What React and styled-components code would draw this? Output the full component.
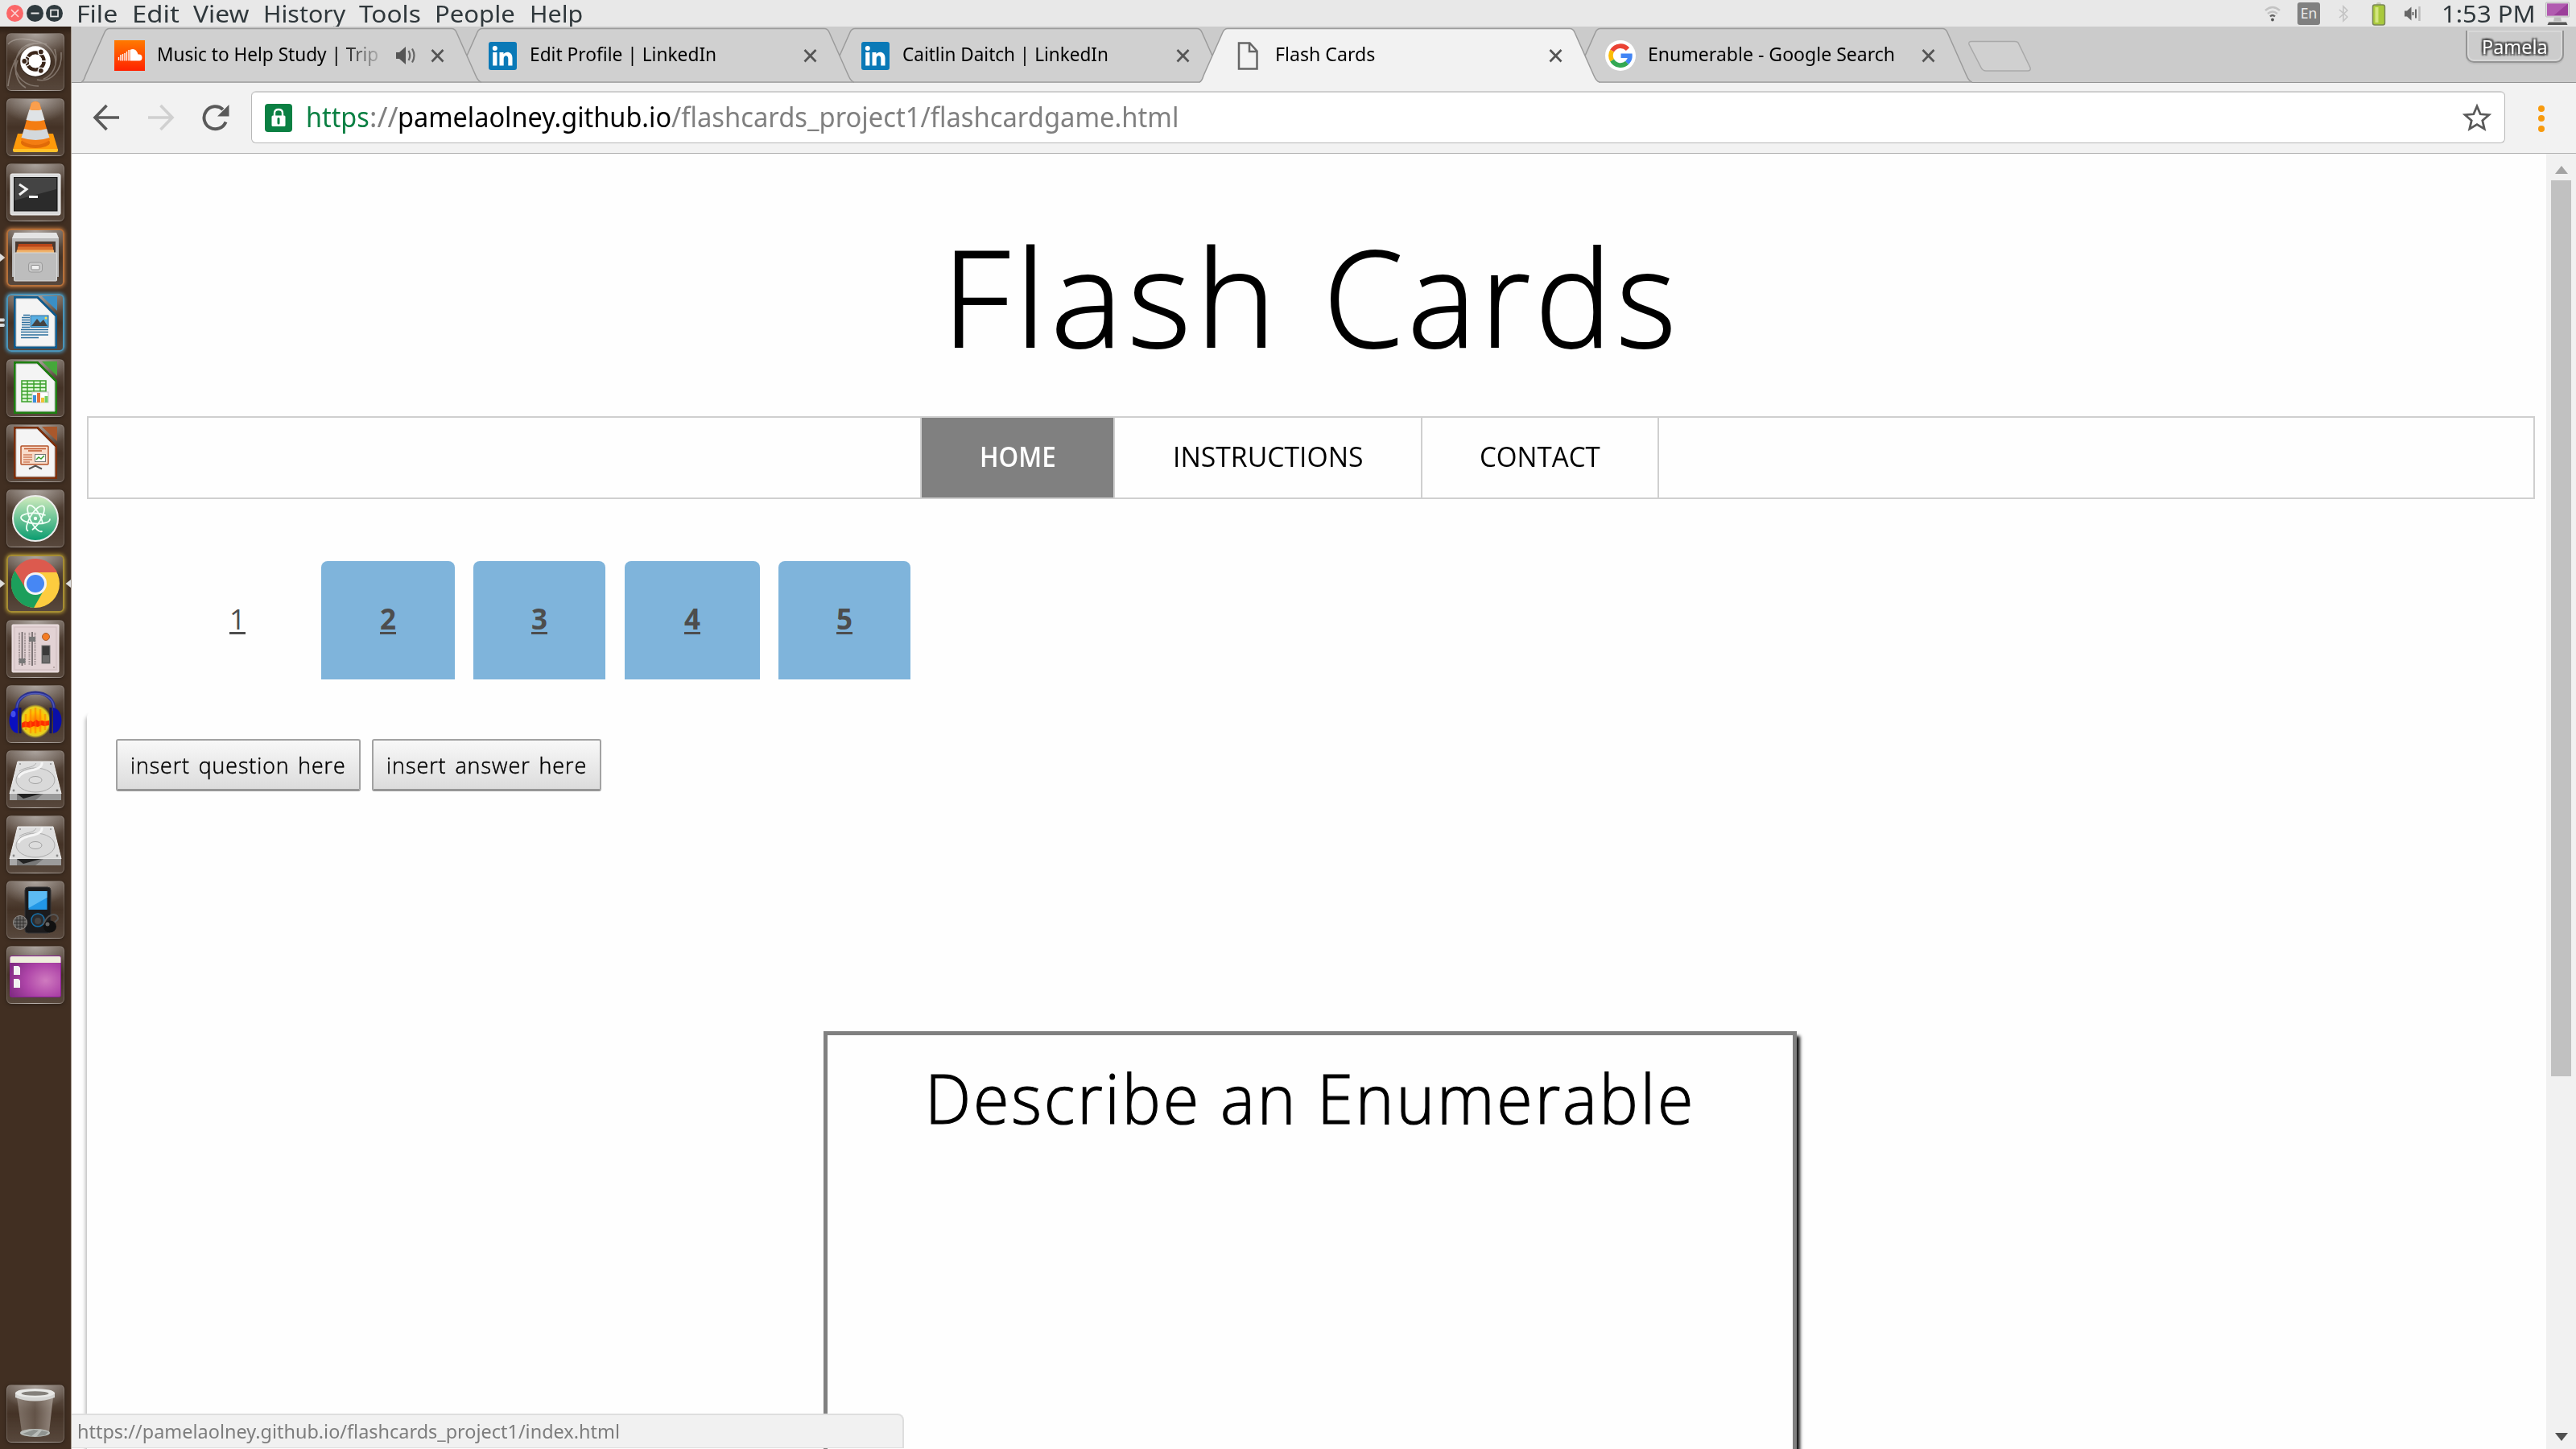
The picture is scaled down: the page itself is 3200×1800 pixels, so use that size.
import React, { useLayoutEffect, useRef, useState } from "react";
import styled, { createGlobalStyle, css } from "styled-components";

const UI_FONT = '"Noto Sans", "Open Sans", sans-serif';
const PAGE_FONT = '"Open Sans", "Noto Sans", sans-serif';

const GlobalStyle = createGlobalStyle`
  *, *::before, *::after { box-sizing: border-box; }
  html, body { margin: 0; padding: 0; }
  body { width: 3200px; height: 1800px; overflow: hidden; background: #fff; font-family: ${UI_FONT}; }
  svg { display: block; }
`;

/* ---------- text that fills a known measure ---------- */

const Measure = styled.span`
  display: inline-block;
  flex: none;
  width: ${(p) => p.$w}px;
  white-space: nowrap;
  text-align: left;
`;
const Stretch = styled.span`
  display: inline-block;
  transform-origin: 0 50%;
`;

function Fit({ w, children }) {
  const ref = useRef(null);
  const [scale, setScale] = useState(1);
  useLayoutEffect(() => {
    const update = () => {
      if (ref.current && ref.current.offsetWidth) setScale(w / ref.current.offsetWidth);
    };
    update();
    if (document.fonts) document.fonts.ready.then(update);
  }, [w]);
  return (
    <Measure $w={w}>
      <Stretch ref={ref} style={{ transform: `scaleX(${scale})` }}>
        {children}
      </Stretch>
    </Measure>
  );
}

/* ---------- desktop ---------- */

const Desktop = styled.div`
  width: 3200px;
  height: 1800px;
  display: flex;
  flex-direction: column;
  overflow: hidden;
`;

const MenuBar = styled.header`
  flex: none;
  height: 33px;
  background: #e8e8e8;
  display: flex;
  align-items: center;
  justify-content: space-between;
  padding: 0 8px 0 8px;
  color: #30383c;
  font-size: 29.5px;
  line-height: 33px;
`;
const WindowButtons = styled.div`
  display: flex;
  gap: 3.5px;
  width: 87px;
`;
const MenuLeft = styled.nav`
  display: flex;
  align-items: center;
`;
const MenuItem = styled.span`
  margin-right: ${(p) => p.$gap}px;
`;
const Tray = styled.div`
  display: flex;
  align-items: center;
`;
const KeyboardBadge = styled.span`
  width: 28px;
  height: 28px;
  margin: 0 19px 0 20px;
  border-radius: 3px;
  background: #808080;
  color: #e8e8e8;
  font-size: 17.5px;
  line-height: 27px;
  text-align: center;
`;
const Clock = styled.span`
  margin: 0 12px 0 26px;
`;

const Workspace = styled.div`
  flex: 1;
  min-height: 0;
  display: flex;
`;

/* ---------- launcher ---------- */

const Dock = styled.aside`
  flex: none;
  width: 89px;
  display: flex;
  flex-direction: column;
  padding: 8px 0;
  background: linear-gradient(180deg, #2b1d13 0, #412f22 10px, #412f22 100%);
  border-right: 1px solid #a79d92;
`;
const DockSlot = styled.div`
  display: grid;
  grid-template-columns: 8px 72px 8px;
  align-items: center;
  height: 72px;
  margin-bottom: 9px;
  ${(p) => p.$last && css`margin-top: auto; margin-bottom: 0;`}
`;
const Tile = styled.div`
  width: 72px;
  height: 72px;
  border-radius: 6px;
  border: 1.5px solid rgba(255, 255, 255, 0.17);
  background:
    radial-gradient(ellipse 44px 30px at 50% 0, rgba(255, 255, 255, 0.45), rgba(255, 255, 255, 0) 100%),
    linear-gradient(180deg, rgba(255, 255, 255, 0.22), rgba(255, 255, 255, 0.02) 50%, rgba(255, 255, 255, 0.12));
  box-shadow: 0 1px 5px rgba(0, 0, 0, 0.35);
  ${(p) =>
    p.$glow &&
    css`
      border: 2.5px solid ${p.$glow};
      box-shadow: 0 0 4px 1px ${p.$glow};
    `}
  & > svg {
    margin: ${(p) => (p.$glow ? "-2px" : "-1px")};
  }
`;

const Sheet = ({ dark, light, children }) => (
  <>
    <path d="M9 3h30l24 24v41H9z" fill={dark} />
    <path d="M12 6h26l22 22v37H12z" fill="#f4f4f4" stroke="#c5c5c5" />
    <path d="M44 3h19v18z" fill={light} />
    <path d="M39 3l24 24v2L38 4z" fill={dark} />
    {children}
  </>
);

const Disk = () => (
  <>
    <path d="M14 14h44l10 40H4z" fill="#dedede" stroke="#f2f2f2" />
    <path d="M4 54h64v8H4z" fill="#777" />
    <path d="M4 54h9v8H4z" fill="#a8a8a8" />
    <path d="M13 54h30l-22 6z" fill="#222" />
    <path d="M46 54h22v8H36z" fill="#9b9b9b" />
    <ellipse cx="36" cy="37" rx="24" ry="15" fill="#d9d9d9" stroke="#aaa" />
    <path d="M15 34c3-11 31-7 29-19" fill="none" stroke="#f5f5f5" strokeWidth="3" />
    <path d="M16 26c8-6 16-3 21-10" fill="none" stroke="#b0b0b0" />
    <ellipse cx="36" cy="37" rx="8" ry="4.5" fill="#ddd" stroke="#a2a2a2" />
    <circle cx="9" cy="50" r="1.4" fill="#888" />
    <circle cx="63" cy="50" r="1.4" fill="#888" />
    <circle cx="17" cy="17" r="0.9" fill="#888" />
    <circle cx="55" cy="17" r="0.9" fill="#888" />
  </>
);

const ICONS = {
  dash: (
    <>
      <path d="M2 14C8 6 24 6 36 10c16 2 26 16 25 28M2 66C8 20 30 8 50 14M12 52C8 28 18 14 34 13M10 34c0 24 16 32 30 32M24 68C10 60 10 44 14 34M68 24c2 24-14 38-30 34M60 20c6 20-4 34-14 37" fill="none" stroke="#c9c0ba" strokeOpacity="0.42" strokeWidth="1.6" />
      <circle cx="36.5" cy="36.5" r="19" fill="#000" opacity="0.25" />
      <circle cx="36" cy="35" r="18.8" fill="#fff" />
      <circle cx="36" cy="35" r="10.6" fill="none" stroke="#3a261a" strokeWidth="4.4" />
      <path d="M36 35L20 26M36 35L20 44M36 35h18M36 35l9-16M36 35l9 16" stroke="#fff" strokeWidth="1.4" />
      <circle cx="36" cy="35" r="8.2" fill="#fff" />
      {[[22.3, 35], [42.8, 23.4], [42.8, 46.8]].map(([x, y]) => (
        <circle key={`${x}-${y}`} cx={x} cy={y} r="3.5" fill="#3a261a" stroke="#fff" strokeWidth="1.2" />
      ))}
    </>
  ),
  vlc: (
    <>
      <path d="M14 44h44l6 20q0 2-2 2H10q-2 0-2-2z" fill="#ff9a0a" />
      <path d="M8 63h56v2q0 2-2 2H10q-2 0-2-2z" fill="#ffc02a" />
      <ellipse cx="36" cy="55" rx="18" ry="7" fill="#e06a08" />
      <path d="M31 6q5-4 10 0l13 46q-18 12-36 0z" fill="#f47d12" />
      <path d="M28.500 14q7 2 15 0l4 13q-11 3-23 0z" fill="#dfe3e6" />
      <path d="M22 38q14 4 28 0l3.500 11q-17 6-35 0z" fill="#d3d8dc" />
      <path d="M31 6q5-4 10 0l2.300 8q-7 2-14.600 0z" fill="#fa9f4e" />
    </>
  ),
  terminal: (
    <>
      <rect x="5" y="13" width="62" height="51" rx="2" fill="#d9d9d9" stroke="#f3f3f3" />
      <rect x="9.500" y="17.500" width="53.500" height="41.500" fill="#2b2b2b" stroke="#111" />
      <path d="M10 18h52v14L10 46z" fill="#fff" opacity="0.12" />
      <path d="M16 26l9 6-9 7" fill="none" stroke="#f4f4f4" strokeWidth="3" />
      <path d="M28 41.500h11" stroke="#f4f4f4" strokeWidth="3" />
    </>
  ),
  files: (
    <>
      <path d="M10 5h52l3 7v48H7V12z" fill="#b9b9b9" />
      <path d="M10 5h52l3 7H7z" fill="#e4e4e4" />
      <rect x="11" y="16" width="50" height="16" fill="#4b3a31" />
      <path d="M15 19h42v12H13z" fill="#b9461a" />
      <path d="M14 22.500h44v9H13z" fill="#d9702f" />
      <path d="M13 26.500h46v5H12z" fill="#f0b36c" />
      <rect x="9.500" y="30" width="53" height="35" rx="1" fill="#bdbdbd" stroke="#d8d8d8" />
      <rect x="27.500" y="42" width="17" height="12" rx="3" fill="#c9c9c9" stroke="#9a9a9a" />
      <rect x="31" y="45.500" width="10" height="5.500" rx="1" fill="#f0f0f0" stroke="#8a8a8a" />
    </>
  ),
  writer: (
    <Sheet dark="#0e5b8e" light="#3a8fc6">
      <path d="M21 26.500h8M19 29.500h10M19 32.500h10M19 35.500h10M19 38.500h10M19 41.500h10M18 44.500h34M18 47.500h34M18 51h34M18 54.500h22" stroke="#2a6d9c" strokeWidth="1.400" />
      <rect x="30" y="27" width="22" height="14.500" fill="#58aee2" stroke="#2a6d9c" />
      <path d="M31 40l7-9 4 5 4-4 5 8z" fill="#444" />
      <circle cx="49" cy="30" r="1.500" fill="#ffe14a" />
    </Sheet>
  ),
  calc: (
    <Sheet dark="#1d7f10" light="#45a83a">
      <rect x="19" y="27" width="30" height="26" fill="#dff7d8" stroke="#3aa02a" strokeWidth="1.500" />
      <path d="M19 31h30M19 35.500h30M19 40h30M19 44.500h30M19 49h30M26 27v26M34 27v26M42 27v26" stroke="#3aa02a" strokeWidth="1.400" />
      <rect x="32" y="41" width="20" height="13" fill="#fff" stroke="#c7c7c7" />
      <path d="M33 45h4v9h-4z" fill="#3b8fdd" />
      <path d="M38 42h4v12h-4z" fill="#e2753c" />
      <path d="M43 48h4v6h-4z" fill="#efc336" />
      <path d="M47.500 46h4v8h-4z" fill="#72cf62" />
    </Sheet>
  ),
  impress: (
    <Sheet dark="#7d2f0b" light="#a9582c">
      <rect x="18" y="27" width="34" height="23" rx="1" fill="#f8dccb" stroke="#b5532a" strokeWidth="1.500" />
      <path d="M22 30.500h27M27 33h17" stroke="#bf552b" strokeWidth="1.400" />
      <path d="M21 38h11M21 41h11M21 44h11M21 47h8" stroke="#bf552b" />
      <rect x="35.500" y="37.500" width="13" height="9" fill="#fff" stroke="#777" />
      <path d="M37 44l3-3 3 2 4-4" stroke="#3b9c2e" fill="none" strokeWidth="1.500" />
      <path d="M36 51v2M28 55.500l8-4 8 4" stroke="#555" strokeWidth="2" fill="none" />
    </Sheet>
  ),
  atom: (
    <>
      <defs>
        <linearGradient id="atomFill" x1="0" y1="0" x2="0" y2="1">
          <stop offset="0" stopColor="#d3edbf" />
          <stop offset="1" stopColor="#079b6e" />
        </linearGradient>
      </defs>
      <circle cx="36" cy="36" r="28" fill="url(#atomFill)" stroke="#ececec" strokeWidth="2" />
      <g fill="none" stroke="#f1fff6" strokeWidth="1.800" strokeLinecap="round">
        <ellipse cx="36" cy="36" rx="18" ry="6.500" strokeDasharray="72 9" transform="rotate(4 36 36)" />
        <ellipse cx="36" cy="36" rx="18" ry="6.500" strokeDasharray="70 11" transform="rotate(64 36 36)" />
        <ellipse cx="36" cy="36" rx="18" ry="6.500" strokeDasharray="74 7" transform="rotate(122 36 36)" />
      </g>
      <circle cx="36" cy="36" r="2.200" fill="#f1fff6" />
    </>
  ),
  chrome: (
    <>
      <circle cx="36" cy="36" r="30" fill="#fdcc3f" />
      <path d="M36 22h27A30 30 0 0 0 10 20l14 23z" fill="#dc5a4e" />
      <path d="M10.500 20A30 30 0 0 0 34 66l12.500-22H25z" fill="#1c9f5b" />
      <circle cx="36" cy="36" r="14" fill="#f4f4f4" />
      <circle cx="36" cy="36" r="11" fill="#4687f4" />
    </>
  ),
  mixer: (
    <>
      <rect x="7" y="6" width="58" height="59" rx="1" fill="#e2d2d4" stroke="#f3e9ea" />
      <rect x="10" y="9" width="52" height="53" fill="none" stroke="#cdbcbe" />
      <path d="M16 16v40M23 16v40M28.500 16v40M35.500 16v40" stroke="#857a7b" strokeWidth="2" strokeDasharray="1 1.200" />
      <path d="M19.500 15v42M32 15v42" stroke="#6e6667" strokeWidth="1.700" />
      <rect x="15.500" y="48" width="8" height="6" rx="1" fill="#777" />
      <rect x="28" y="21" width="8" height="6" rx="1" fill="#777" />
      <circle cx="49" cy="21" r="4.500" fill="#f47c24" stroke="#a35f32" />
      <rect x="44" y="32" width="10" height="22" fill="#3a3a3a" stroke="#777" />
      <path d="M45 44h8v9h-8z" fill="#6c6c6c" />
      <circle cx="59" cy="59" r="1" fill="#a99" />
    </>
  ),
  audacity: (
    <>
      <defs>
        <radialGradient id="wave">
          <stop offset="0" stopColor="#ff7a00" />
          <stop offset="0.550" stopColor="#ffc400" />
          <stop offset="0.850" stopColor="#f6e020" stopOpacity="0.900" />
          <stop offset="1" stopColor="#f6e020" stopOpacity="0" />
        </radialGradient>
      </defs>
      <path d="M13 32C10 2 62 2 59 32" fill="none" stroke="#2a2f8c" strokeWidth="4" />
      <path d="M13 30C11 4 61 4 59 30" fill="none" stroke="#4e58b8" strokeWidth="1.500" />
      <ellipse cx="36" cy="45" rx="20" ry="21" fill="url(#wave)" />
      <path d="M19 47l4-2 4 1 3-2 3 2 4-3 3 2 4-1 4 1 5-1v6l-6 1-4-1-4 2-5-1-5 2-5-1-5 1z" fill="#ff1d00" opacity="0.900" />
      <path d="M24 36v20M30 30v30M36 28v32M42 30v28M48 36v20" stroke="#ff6a00" strokeWidth="2.500" opacity="0.450" />
      <path d="M14 28C0 30 0 58 14 60z" fill="#0a0fc0" />
      <path d="M58 28c14 2 14 30 0 32z" fill="#0a0fa8" />
      <path d="M17 28v32M55 28v32" stroke="#10155f" strokeWidth="3" />
      <ellipse cx="8.500" cy="36" rx="3" ry="4" fill="#5a68ff" opacity="0.700" />
    </>
  ),
  disk: <Disk />,
  player: (
    <>
      <rect x="23" y="8" width="32" height="57" rx="4" fill="#1b1b1d" stroke="#343436" />
      <rect x="27.500" y="13" width="23" height="23" fill="#2297e6" />
      <path d="M27.500 13h23v8L27.500 34z" fill="#6cc4f6" opacity="0.800" />
      <circle cx="39" cy="49" r="8" fill="#2b2b2d" stroke="#1672ad" strokeWidth="1.500" />
      <circle cx="39" cy="50" r="4" fill="#444" />
      <path d="M46 55c4-14 16-16 18-9 1 4-6 5-6 8" fill="none" stroke="#555" strokeWidth="2" />
      <circle cx="17" cy="52" r="8.500" fill="#6c6a68" stroke="#8e8a87" />
      <path d="M10 49h14M9 53h16M12 57h10M13 45v14M17 44v16M21 45v14" stroke="#2f2d2b" strokeWidth="0.900" />
      <ellipse cx="54" cy="57" rx="8" ry="7.500" fill="#111" />
      <circle cx="51" cy="54" r="2.500" fill="#666" />
    </>
  ),
  workspaces: (
    <>
      <defs>
        <radialGradient id="desk" cx="0.700" cy="0.600" r="0.800">
          <stop offset="0" stopColor="#cf7abf" />
          <stop offset="0.500" stopColor="#ae45a8" />
          <stop offset="1" stopColor="#7d2a80" />
        </radialGradient>
      </defs>
      <rect x="4.500" y="12.500" width="63" height="51" rx="2" fill="url(#desk)" stroke="#8a1f95" />
      <path d="M4.500 15q0-2 2-2h59q2 0 2 2v6h-63z" fill="#efeedd" />
      <path d="M9 25h6l2 2v9H9zM9 41h6l2 2v9H9z" fill="#f2f2f2" />
    </>
  ),
  trash: (
    <>
      <defs>
        <linearGradient id="bin" x1="0" y1="0" x2="1" y2="0">
          <stop offset="0" stopColor="#a3988f" stopOpacity="0.600" />
          <stop offset="0.500" stopColor="#6f6055" stopOpacity="0.700" />
          <stop offset="1" stopColor="#b5aba3" stopOpacity="0.700" />
        </linearGradient>
      </defs>
      <path d="M13 16h45l-5 43q-17 10-34 0z" fill="url(#bin)" />
      <ellipse cx="35.500" cy="60" rx="18.500" ry="5" fill="#b9bdb9" />
      <path d="M20 61l14-5 6 1-9 7zM38 64l6-7 8 2-4 4z" fill="#8f938f" />
      <path d="M11 10v6q24 9 49 0v-6z" fill="#d4d4d2" />
      <ellipse cx="35.500" cy="10.500" rx="24.500" ry="5.500" fill="#e8e8e6" />
      <ellipse cx="35.500" cy="11" rx="17" ry="2.800" fill="#84807b" />
    </>
  ),
};

const DOCK_ITEMS = [
  { icon: "dash" },
  { icon: "vlc" },
  { icon: "terminal" },
  { icon: "files", glow: "#b5703a", left: "arrow" },
  { icon: "writer", glow: "#4a93b8", left: "pips" },
  { icon: "calc" },
  { icon: "impress" },
  { icon: "atom" },
  { icon: "chrome", glow: "#a58c32", left: "arrow", right: true },
  { icon: "mixer" },
  { icon: "audacity" },
  { icon: "disk" },
  { icon: "disk" },
  { icon: "player" },
  { icon: "workspaces" },
  { icon: "trash" },
];

const Marker = ({ kind }) => (
  <svg width="8" height="14" viewBox="0 0 8 14">
    {kind === "arrow" && <path d="M0 2l6.500 5L0 12z" fill="#ddd" />}
    {kind === "pips" && <path d="M0 1.500h5q2 2 0 4H0zM0 8h5q2 2 0 4H0z" fill="#ddd" />}
    {kind === "back" && <path d="M8 2L1.500 7 8 12z" fill="#ddd" />}
  </svg>
);

function Launcher() {
  return (
    <Dock>
      {DOCK_ITEMS.map((it, i) => (
        <DockSlot key={i} $last={i === DOCK_ITEMS.length - 1}>
          <Marker kind={it.left} />
          <Tile $glow={it.glow}>
            <svg width="72" height="72" viewBox="0 0 72 72">{ICONS[it.icon]}</svg>
          </Tile>
          <Marker kind={it.right ? "back" : undefined} />
        </DockSlot>
      ))}
    </Dock>
  );
}

/* ---------- browser chrome ---------- */

const Browser = styled.main`
  flex: 1;
  min-width: 0;
  display: flex;
  flex-direction: column;
  position: relative;
  background: #fff;
`;
const TabStrip = styled.div`
  flex: none;
  height: 70px;
  padding: 1px 15px 0 12px;
  background: #cbcbcb;
  display: flex;
  align-items: flex-start;
  border-bottom: 1px solid #949494;
`;
const TabBox = styled.div`
  display: grid;
  width: 497px;
  height: 69px;
  flex: none;
  margin-right: -34px;
  position: relative;
  z-index: ${(p) => p.$z};
  & > * {
    grid-area: 1 / 1;
  }
`;
const TabContent = styled.div`
  display: flex;
  align-items: center;
  padding: 1px 46px 0 41px;
  font-size: 23.5px;
  line-height: 36px;
  color: #000;
`;
const Favicon = styled.span`
  width: 38px;
  height: 38px;
  margin-right: 14.5px;
  display: grid;
  place-items: center;
`;
const TabTitle = styled.span`
  flex: 1;
  margin-bottom: 4px;
  ${(p) => p.$fade && css`mask-image: linear-gradient(90deg, #000 225px, transparent 285px);`}
`;
const SoundMark = styled.span`
  margin-right: 19px;
`;
const NewTab = styled.div`
  margin: 16px 0 0 28px;
`;
const ProfileButton = styled.div`
  margin-left: auto;
  margin-top: 4px;
  width: 122px;
  height: 40px;
  border: 2px solid #949494;
  border-top: 0;
  border-radius: 0 0 10px 10px;
  background: #cccccc;
  box-shadow: inset 0 0 0 2px #d8d8d8, 0 2px 1px #bdbdbd;
  padding: 3px 0 0 18px;
  font-size: 24px;
  line-height: 34px;
  color: #fff;
  text-shadow: -2px -2px 2px #4a4a4a, 2px -2px 2px #4a4a4a, -2px 2px 2px #4a4a4a, 2px 2px 2px #4a4a4a,
    0 0 3px #444;
`;

const CloseMark = () => (
  <svg width="17" height="18" viewBox="0 0 17 18">
    <path d="M1.500 2l14 14.500M15.500 2l-14 14.500" stroke="#555" strokeWidth="2.700" />
  </svg>
);
const SoundCloud = () => (
  <svg width="38" height="38" viewBox="0 0 38 38">
    <defs>
      <linearGradient id="sc" x1="0" y1="0" x2="0" y2="1">
        <stop offset="0" stopColor="#ff7a00" />
        <stop offset="1" stopColor="#ff2200" />
      </linearGradient>
    </defs>
    <rect width="38" height="38" fill="url(#sc)" />
    <path d="M5.500 21v4M8 18v7.500M10.500 17v8.500M13 16v9.500M15.500 14v11.500M18 12v13.500" stroke="#fff" strokeWidth="1.400" />
    <path d="M19.500 12q7-3.500 10 5.500 5-.500 5 4t-4 4h-11z" fill="#fff" />
  </svg>
);
const LinkedIn = () => (
  <svg width="35" height="35" viewBox="0 0 35 35">
    <rect width="35" height="35" rx="3" fill="#0a79b7" />
    <circle cx="7.800" cy="8" r="3" fill="#fff" />
    <path d="M5.200 13h5.200v16.500H5.200zM13.500 13h5v2.300c2.500-4.300 11-3.600 11 4.700v9.500h-5.200v-8.600c0-5-5.600-4.600-5.600 0v8.600h-5.200z" fill="#fff" />
  </svg>
);
const PageGlyph = () => (
  <svg width="26" height="35" viewBox="0 0 26 35">
    <path d="M2 1.500h13.500l9 10v22H2zM15 1.500V12h9.500" fill="none" stroke="#666" strokeWidth="2.500" />
  </svg>
);
const Google = () => (
  <svg width="38" height="38" viewBox="0 0 38 38">
    <circle cx="19" cy="19" r="19" fill="#fff" />
    <g fill="none" strokeWidth="5.600">
      <path d="M28 11.200A12 12 0 0 0 8.600 13.200" stroke="#ea4335" />
      <path d="M8.600 13.200a12 12 0 0 0 0 11.800" stroke="#fbbc05" />
      <path d="M8.600 25a12 12 0 0 0 18.600 2.900" stroke="#34a853" />
      <path d="M27.200 27.900c2.600-2.600 3.900-5.200 3.700-8.700H19.500" stroke="#4285f4" />
    </g>
  </svg>
);

const TABS = [
  { icon: <SoundCloud />, title: "Music to Help Study | Trip", w: 275, sound: true },
  { icon: <LinkedIn />, title: "Edit Profile | LinkedIn", w: 232 },
  { icon: <LinkedIn />, title: "Caitlin Daitch | LinkedIn", w: 256 },
  { icon: <PageGlyph />, title: "Flash Cards", w: 124, active: true },
  { icon: <Google />, title: "Enumerable - Google Search", w: 307 },
];

function Tab({ tab, index }) {
  return (
    <TabBox $z={tab.active ? 9 : 7 - index}>
      <svg width="497" height="69" viewBox="0 0 497 69">
        <path
          d="M0 69 Q3 67 5 60 L29 6 Q31 1.500 35 1.500 H460 Q464 1.500 466 6 L490 60 Q493 67 497 69z"
          fill={tab.active ? "#f2f2f2" : "#d0d0d0"}
        />
        <path
          d="M0 68 Q3 67 5 60 L29 6 Q31 1.500 35 1.500 H460 Q464 1.500 466 6 L490 60 Q493 67 497 68"
          fill="none"
          stroke="#9b9b9b"
          strokeWidth="1.500"
        />
        {!tab.active && <path d="M0 68h497" stroke="#a0a0a0" strokeWidth="1.500" />}
      </svg>
      <TabContent>
        <Favicon>{tab.icon}</Favicon>
        <TabTitle $fade={tab.sound}>
          <Fit w={tab.w}>{tab.title}</Fit>
        </TabTitle>
        {tab.sound && (
          <SoundMark>
            <svg width="24" height="22" viewBox="0 0 24 22">
              <path d="M0 7h4l8-7v22l-8-7H0z" fill="#555" />
              <path d="M15.500 5q3.500 6 0 12M20 2.500q5 8.500 0 17" fill="none" stroke="#666" strokeWidth="2.200" />
            </svg>
          </SoundMark>
        )}
        <CloseMark />
      </TabContent>
    </TabBox>
  );
}

const Toolbar = styled.div`
  flex: none;
  height: 88px;
  background: #f2f2f2;
  border-bottom: 1px solid #b2b2b2;
  display: flex;
  align-items: flex-start;
  padding: 10px 0 0 26px;
`;
const NavButtons = styled.div`
  display: flex;
  align-items: center;
  gap: 34px;
  height: 66px;
  width: 197px;
`;
const AddressBar = styled.div`
  width: 2800px;
  height: 65px;
  border: 1.5px solid #b8b8b8;
  border-top: 2px solid #cfcfcf;
  border-radius: 6px;
  background: #fff;
  display: flex;
  align-items: center;
  padding: 0 16px 0 16px;
  font-size: 34px;
  line-height: 60px;
`;
const Url = styled.span`
  flex: 1;
  display: flex;
  margin: 0 0 3px 17px;
`;
const UrlPart = styled.span`
  color: ${(p) => p.$color};
`;
const MoreButton = styled.div`
  display: flex;
  flex-direction: column;
  gap: 4.500px;
  margin: 17.500px 0 0 41px;
`;
const Dot = styled.i`
  width: 8px;
  height: 8px;
  border-radius: 50%;
  background: #f79a0e;
`;

/* ---------- page ---------- */

const Viewport = styled.div`
  flex: 1;
  min-height: 0;
  display: flex;
`;
const Page = styled.div`
  flex: 1;
  min-width: 0;
  overflow: hidden;
  padding: 76px 14px 0 19px;
  font-family: ${PAGE_FONT};
  color: #000;
  background: #fefefe;
  display: flex;
  flex-direction: column;
`;
const Title = styled.h1`
  margin: 0;
  padding-left: 1062px;
  height: 250px;
  display: flex;
  gap: 53px;
  font-size: 166px;
  line-height: 200px;
  font-weight: 300;
  letter-spacing: 6px;
  -webkit-text-stroke: 1.8px #000;
`;
const SiteNav = styled.nav`
  flex: none;
  height: 103px;
  border: 2px solid #cfcfcf;
  display: flex;
  padding-left: 1033px;
  font-size: 34px;
  line-height: 97px;
`;
const NavLink = styled.a`
  width: ${(p) => p.$w}px;
  text-align: center;
  border-right: 2px solid #cfcfcf;
  ${(p) =>
    p.$active &&
    css`
      background: #808080;
      color: #fff;
      font-weight: 600;
      border-left: 2px solid #cfcfcf;
    `}
`;
const Decks = styled.div`
  flex: none;
  display: flex;
  height: 147px;
  margin: 77px 0 39px 79px;
`;
const Deck = styled.a`
  width: ${(p) => p.$w}px;
  margin-right: ${(p) => p.$gap}px;
  border-radius: 8px 8px 0 0;
  background: ${(p) => (p.$current ? "transparent" : "#7fb4db")};
  color: #4d4d4d;
  font-size: 35px;
  line-height: 143px;
  font-weight: ${(p) => (p.$current ? 500 : 700)};
  text-align: center;
  text-decoration: underline;
  text-decoration-thickness: 3px;
  text-underline-offset: 3px;
`;
const Panel = styled.section`
  flex: 1;
  min-height: 0;
  margin-right: -14px;
  border-radius: 8px 0 0 0;
  background: #fefefe;
  box-shadow: -2px 5px 4px rgba(0, 0, 0, 0.26);
  padding: 35px 0 0 36px;
  display: flex;
  flex-direction: column;
`;
const Buttons = styled.div`
  flex: none;
  display: flex;
  gap: 14px;
  height: 65px;
`;
const InsertButton = styled.button`
  width: ${(p) => p.$w}px;
  height: 65px;
  padding: 0;
  border: 2px solid #a2a2a2;
  border-bottom: 3px solid #969696;
  border-radius: 3px;
  background: linear-gradient(#f8f8f8, #dcdcdc);
  font-family: ${PAGE_FONT};
  font-size: 28px;
  line-height: 58px;
  font-weight: 300;
  letter-spacing: 1px;
  word-spacing: 3px;
  -webkit-text-stroke: 0.5px #000;
  color: #000;
`;
const Card = styled.article`
  flex: none;
  width: 1209px;
  height: 700px;
  margin: 298px 0 0 879px;
  border: 5px solid #808080;
  box-shadow: 4px 6px 4px #111;
  background: #fefefe;
  padding: 23px 0 0 121px;
  font-size: 84px;
  line-height: 110px;
  font-weight: 300;
  letter-spacing: 3px;
  -webkit-text-stroke: 1.2px #000;
`;
const Scrollbar = styled.div`
  flex: none;
  width: 37px;
  background: #f1f1f1;
  display: flex;
  flex-direction: column;
  align-items: center;
  padding: 15px 0 10px;
`;
const Thumb = styled.div`
  width: 25px;
  height: 1113px;
  margin: 8px 0 auto;
  background: #c1c1c1;
`;
const StatusBubble = styled.div`
  position: absolute;
  left: 0;
  bottom: 1px;
  width: 1034px;
  height: 43px;
  padding-left: 7px;
  border: 2px solid #dedede;
  border-left: 0;
  border-bottom-width: 1px;
  border-radius: 0 8px 0 0;
  background: #f1f1f1;
  color: #7d7d7d;
  font-size: 24px;
  line-height: 40px;
`;

const Deskbar = () => (
  <MenuBar>
    <MenuLeft>
      <WindowButtons>
        <svg width="21" height="21" viewBox="0 0 21 21">
          <circle cx="10.500" cy="10.500" r="10.500" fill="#fb6667" />
          <path d="M6 6l9 9M15 6l-9 9" stroke="#fbd5d5" strokeWidth="1.600" />
        </svg>
        <svg width="21" height="21" viewBox="0 0 21 21">
          <circle cx="10.500" cy="10.500" r="10.500" fill="#2f3a3e" />
          <path d="M5.500 10.500h10" stroke="#e8e8e8" strokeWidth="2" />
        </svg>
        <svg width="21" height="21" viewBox="0 0 21 21">
          <circle cx="10.500" cy="10.500" r="10.500" fill="#2f3a3e" />
          <rect x="6" y="6.500" width="9" height="8" fill="none" stroke="#e8e8e8" strokeWidth="1.700" />
        </svg>
      </WindowButtons>
      {[
        ["File", 51, 18],
        ["Edit", 59, 17],
        ["View", 70, 17],
        ["History", 102, 17],
        ["Tools", 77, 17],
        ["People", 100, 18],
        ["Help", 66, 0],
      ].map(([label, w, gap]) => (
        <MenuItem key={label} $gap={gap}>
          <Fit w={w}>{label}</Fit>
        </MenuItem>
      ))}
    </MenuLeft>
    <Tray>
      <svg width="22" height="20" viewBox="0 0 22 20">
        <path d="M2 6q9-8 18 0M5 10q6-5 12 0" fill="none" stroke="#c3c3c3" strokeWidth="2.400" />
        <path d="M8 13.500q3-3 6 0" fill="none" stroke="#666" strokeWidth="2.400" />
        <circle cx="11" cy="17.500" r="1.900" fill="#555" />
      </svg>
      <KeyboardBadge>En</KeyboardBadge>
      <svg width="20" height="22" viewBox="0 0 20 22">
        <path d="M5 6l10 9-5 5V2l5 5-10 9" fill="none" stroke="#c4c4c4" strokeWidth="1.600" />
      </svg>
      <svg width="66" height="30" viewBox="0 0 66 30">
        <rect x="31" y="1" width="6" height="5" rx="2" fill="#c5cbb5" />
        <rect x="26.500" y="4" width="15" height="25" rx="2.500" fill="#a9c93c" stroke="#7b8758" strokeWidth="1.500" />
        <path d="M31.500 7v19" stroke="#d3e67f" strokeWidth="4" />
      </svg>
      <svg width="20" height="20" viewBox="0 0 20 20">
        <path d="M0 6.500h3l5.500-5v17l-5.500-5H0z" fill="#666" />
        <path d="M10.500 8v4" stroke="#666" strokeWidth="2" />
        <path d="M14 4.500v11" stroke="#666" strokeWidth="2" />
        <path d="M18.500 1v18" stroke="#bbb" strokeWidth="2.500" />
      </svg>
      <Clock>
        <Fit w={117}>1:53 PM</Fit>
      </Clock>
      <svg width="30" height="30" viewBox="0 0 30 30">
        <rect x="0.500" y="1" width="29" height="18" rx="1" fill="#ddd" stroke="#bbb" />
        <rect x="2" y="2.500" width="26" height="15" fill="#9b3f9a" />
        <path d="M2 2.500h26L10 17.500H2z" fill="#c777c6" opacity="0.500" />
        <path d="M11 19.500h8l1 5H10z" fill="#bdbdbd" />
        <path d="M4 25.500h22l1.500 3.500h-25z" fill="#555" />
      </svg>
    </Tray>
  </MenuBar>
);

export default function App() {
  return (
    <Desktop>
      <GlobalStyle />
      <Deskbar />
      <Workspace>
        <Launcher />
        <Browser>
          <TabStrip>
            {TABS.map((tab, i) => (
              <Tab key={tab.title} tab={tab} index={i} />
            ))}
            <NewTab>
              <svg width="80" height="40" viewBox="0 0 80 40">
                <path
                  d="M5 1.500h54q4 0 5 3.500l14 29q1 4-3 4H23q-4 0-6-4L2 5q-1-3.500 3-3.500z"
                  fill="#d0d0d0"
                  stroke="#a9a9a9"
                  strokeWidth="1.500"
                />
              </svg>
            </NewTab>
            <ProfileButton>
              <Fit w={82}>Pamela</Fit>
            </ProfileButton>
          </TabStrip>
          <Toolbar>
            <NavButtons>
              <svg width="34" height="34" viewBox="0 0 34 34">
                <path d="M33 17H4M17.500 2L3 17l14.500 15" fill="none" stroke="#5a5a5a" strokeWidth="3.600" />
              </svg>
              <svg width="34" height="34" viewBox="0 0 34 34">
                <path d="M1 17h29M16.500 2L31 17 16.500 32" fill="none" stroke="#d0d0d0" strokeWidth="3.600" />
              </svg>
              <svg width="35" height="34" viewBox="0 0 35 34">
                <path d="M29.500 22.500A14 14 0 1 1 26 7" fill="none" stroke="#5a5a5a" strokeWidth="4" />
                <path d="M33.500 1v14.500H19z" fill="#5a5a5a" />
              </svg>
            </NavButtons>
            <AddressBar>
              <svg width="34" height="35" viewBox="0 0 34 35">
                <rect width="34" height="35" rx="4" fill="#0b8043" />
                <rect x="8.500" y="14.500" width="17" height="13.500" rx="1.500" fill="#fff" />
                <path d="M12 15v-3.500q0-4.500 5-4.500t5 4.500V15" fill="none" stroke="#fff" strokeWidth="2.400" />
                <path d="M17 18.500v5.500" stroke="#0b8043" strokeWidth="3" strokeLinecap="round" />
              </svg>
              <Url>
                <UrlPart $color="#0b8043"><Fit w={79}>https</Fit></UrlPart>
                <UrlPart $color="#808080"><Fit w={35}>://</Fit></UrlPart>
                <UrlPart $color="#000"><Fit w={340}>pamelaolney.github.io</Fit></UrlPart>
                <UrlPart $color="#808080"><Fit w={630}>/flashcards_project1/flashcardgame.html</Fit></UrlPart>
              </Url>
              <svg width="36" height="36" viewBox="0 0 36 36">
                <path
                  d="M18 4l4.200 9.800 10.600.900-8 7 2.400 10.400L18 26.600l-9.200 5.500 2.400-10.400-8-7 10.600-.900z"
                  fill="none"
                  stroke="#5a5a5a"
                  strokeWidth="2.800"
                />
              </svg>
            </AddressBar>
            <MoreButton>
              <Dot />
              <Dot />
              <Dot />
            </MoreButton>
          </Toolbar>
          <Viewport>
            <Page>
              <Title>
                <Fit w={421}>Flash</Fit> <Fit w={444}>Cards</Fit>
              </Title>
              <SiteNav>
                <NavLink $w={242} $active>
                  <Fit w={95}>HOME</Fit>
                </NavLink>
                <NavLink $w={382}>
                  <Fit w={237}>INSTRUCTIONS</Fit>
                </NavLink>
                <NavLink $w={294}>
                  <Fit w={150}>CONTACT</Fit>
                </NavLink>
              </SiteNav>
              <Decks>
                <Deck $w={216} $gap={-4} $current>1</Deck>
                <Deck $w={166} $gap={23}>2</Deck>
                <Deck $w={164} $gap={24}>3</Deck>
                <Deck $w={168} $gap={23}>4</Deck>
                <Deck $w={164} $gap={0}>5</Deck>
              </Decks>
              <Panel>
                <Buttons>
                  <InsertButton $w={304}>
                    <Fit w={268}>insert question here</Fit>
                  </InsertButton>
                  <InsertButton $w={285}>
                    <Fit w={249}>insert answer here</Fit>
                  </InsertButton>
                </Buttons>
                <Card>
                  <Fit w={957}>Describe an Enumerable</Fit>
                </Card>
              </Panel>
            </Page>
            <Scrollbar>
              <svg width="16" height="10" viewBox="0 0 16 10">
                <path d="M0 10L8 0l8 10z" fill="#a3a3a3" />
              </svg>
              <Thumb />
              <svg width="16" height="10" viewBox="0 0 16 10">
                <path d="M0 0h16L8 10z" fill="#505050" />
              </svg>
            </Scrollbar>
          </Viewport>
          <StatusBubble>
            <Fit w={674}>https://pamelaolney.github.io/flashcards_project1/index.html</Fit>
          </StatusBubble>
        </Browser>
      </Workspace>
    </Desktop>
  );
}
